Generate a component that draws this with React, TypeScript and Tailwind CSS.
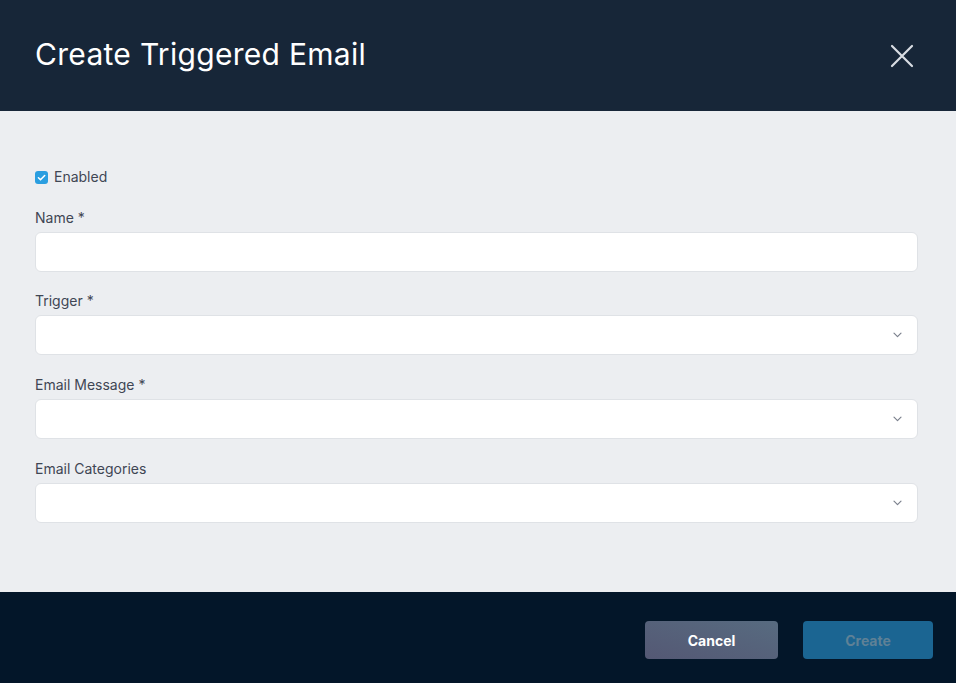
import React, { useState } from "react";

const fields = [
  { label: "Trigger *", gap: "mt-[19px]" },
  { label: "Email Message *", gap: "mt-5" },
  { label: "Email Categories", gap: "mt-5" },
];

function Chevron() {
  return (
    <svg width="9" height="6" viewBox="0 0 9 6" fill="none" className="text-[#7b818d]">
      <path d="M1 1.2l3.5 3.5L8 1.2" stroke="currentColor" strokeWidth="1.2" strokeLinecap="round" strokeLinejoin="round" />
    </svg>
  );
}

export default function App() {
  const [enabled, setEnabled] = useState(true);
  const [name, setName] = useState("");

  return (
    <div className="w-[956px] h-[683px] flex flex-col font-['Inter','Liberation_Sans',sans-serif]">
      <div className="h-[111px] shrink-0 bg-[#172638] flex items-center justify-between pl-[35px] pr-[42px]">
        <h1 className="text-[30px] tracking-[0.3px] text-white pb-[2px]">Create Triggered Email</h1>
        <button className="text-[#d9dde3]">
          <svg width="24" height="24" viewBox="0 0 24 24" fill="none">
            <path d="M2 2l20 20M22 2L2 22" stroke="currentColor" strokeWidth="2.2" strokeLinecap="round" />
          </svg>
        </button>
      </div>

      <div className="flex-1 bg-[#eceef1] pl-[35px] pr-[38px] pt-[56px]">
        <label className="flex items-center gap-[6px] h-5 text-sm text-[#3f4654]">
          <span
            onClick={() => setEnabled(!enabled)}
            className={`w-[13px] h-[13px] rounded-[3px] flex items-center justify-center ${enabled ? "bg-[#2a9ee0]" : "bg-white border border-gray-400"}`}
          >
            {enabled && (
              <svg width="11" height="11" viewBox="0 0 10 10" fill="none">
                <path d="M2.2 5.2l1.9 1.9L7.9 3.2" stroke="white" strokeWidth="1.4" strokeLinecap="round" strokeLinejoin="round" />
              </svg>
            )}
          </span>
          Enabled
        </label>

        <div className="mt-[21px]">
          <div className="text-sm leading-5 text-[#3f4654] mb-1">Name *</div>
          <input
            value={name}
            onChange={(e) => setName(e.target.value)}
            className="w-full h-10 bg-white rounded-md border border-[#dfe2e6] px-3 text-sm outline-none"
          />
        </div>

        {fields.map((f) => (
          <div key={f.label} className={f.gap}>
            <div className="text-sm leading-5 text-[#3f4654] mb-1">{f.label}</div>
            <div className="w-full h-10 bg-white rounded-md border border-[#dfe2e6] flex items-center justify-end pr-[15px]">
              <Chevron />
            </div>
          </div>
        ))}
      </div>

      <div className="h-[91px] shrink-0 bg-[#031629] flex items-start justify-end gap-[25px] pt-[29px] pr-[23px]">
        <button className="w-[133px] h-[38px] rounded-[4px] bg-gradient-to-tr from-[#545874] to-[#576b80] text-white text-[14px] font-bold">
          Cancel
        </button>
        <button className="w-[130px] h-[38px] rounded-[4px] bg-[#1b6592] text-[#5f8196] text-[14px] font-bold">
          Create
        </button>
      </div>
    </div>
  );
}
